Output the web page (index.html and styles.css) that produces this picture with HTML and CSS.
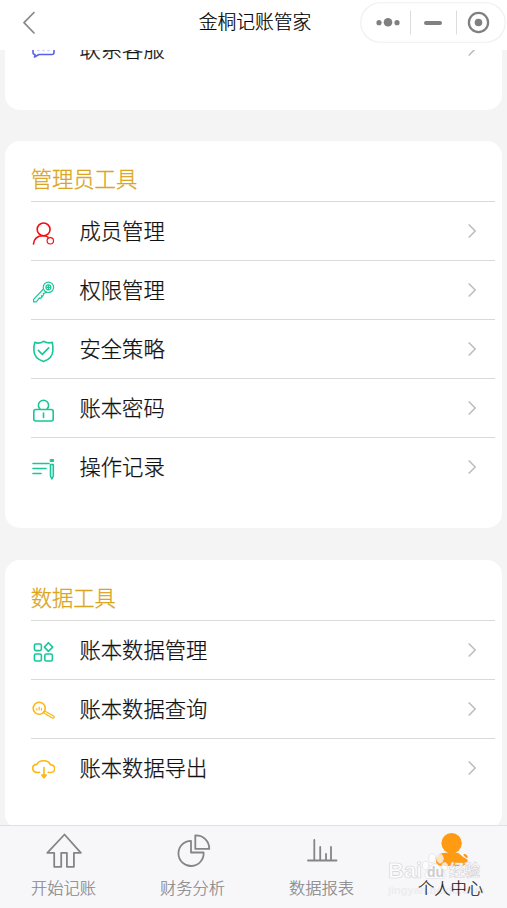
FILE: index.html
```html
<!DOCTYPE html>
<html lang="zh-CN">
<head>
<meta charset="utf-8">
<title>金桐记账管家</title>
<link rel="stylesheet" href="styles.css">
</head>
<body>
<div class="app">
  <header class="header">
    <svg class="back" viewBox="0 0 14 24"><path d="M12 1.5 2 11.7 12 22"/></svg>
    <h1>金桐记账管家</h1>
    <div class="capsule">
      <svg viewBox="0 0 146 41">
        <rect x=".75" y=".75" width="144.5" height="39.5" rx="19.75" fill="#fff" stroke="#f0f0f0" stroke-width="1.2"/>
        <g fill="#808080"><circle cx="19" cy="20.7" r="2.6"/><circle cx="28" cy="20.3" r="4.3"/><circle cx="37" cy="20.7" r="2.6"/><rect x="64" y="19" width="18" height="4" rx="2"/><circle cx="118.5" cy="20.5" r="3.8"/></g>
        <path d="M50.5 9v23M96.5 9v23" stroke="#dcdcdc"/>
        <circle cx="118.5" cy="20.5" r="9.6" fill="none" stroke="#808080" stroke-width="2.3"/>
      </svg>
    </div>
  </header>

  <main class="content">
    <section class="card card-first">
      <div class="row">
        <svg class="icon blue" viewBox="0 0 24 24"><path d="M4 2h17q2 0 2 2v9.500q0 2-2 2H8l-4.500 2.500.5-2.500q-2 0-2-2V4q0-2 2-2Z"/><path d="M7 11.500h1m4 0h1m4 0h1" opacity=".3"/></svg>
        <span>联系客服</span>
        <svg class="arrow" viewBox="0 0 9 14"><path d="m1.200 1 6 6-6 6"/></svg>
      </div>
    </section>

    <section class="card">
      <h2>管理员工具</h2>
      <div class="row">
        <svg class="icon red" viewBox="0 0 24 24"><circle cx="12.600" cy="8.400" r="6.400"/><path d="M2.500 23c.5-5 4-8.300 9.500-8.300 2.200 0 3.700.5 5 1.400"/><circle class="thin" cx="19.300" cy="19.800" r="3.200"/></svg>
        <span>成员管理</span>
        <svg class="arrow" viewBox="0 0 9 14"><path d="m1.200 1 6 6-6 6"/></svg>
      </div>
      <div class="row">
        <svg class="icon green thin" viewBox="0 0 24 24"><circle cx="17.400" cy="7.300" r="5.200"/><circle cx="17.400" cy="7.300" r="2.500"/><path d="M17.400 5.500v3.600M15.600 7.300h3.600M12.500 9 2.600 19.400v2.500h2.700l3.200-4.100.8.700 1.600-1.300-.5-1.500 1.200.4 1.100-1.700-.4-.8 3.200-1.300"/></svg>
        <span>权限管理</span>
        <svg class="arrow" viewBox="0 0 9 14"><path d="m1.200 1 6 6-6 6"/></svg>
      </div>
      <div class="row">
        <svg class="icon green" viewBox="0 0 24 24"><path d="M12.500 2.300Q8 5.300 3.800 3.300 2.800 6 2.900 11.500c.1 5.300 3.700 9 9.600 11.100 5.700-2.100 9.300-5.800 9.400-11.100.1-5.500-.7-8.200-.7-8.200-3.500 1.400-6 .5-8.700-1Z"/><path d="m7.300 11.400 4 4 6.400-6.500"/></svg>
        <span>安全策略</span>
        <svg class="arrow" viewBox="0 0 9 14"><path d="m1.200 1 6 6-6 6"/></svg>
      </div>
      <div class="row">
        <svg class="icon green" viewBox="0 0 24 24"><path d="M9 11a5.100 5.100 0 1 1 7 0"/><rect x="2.800" y="11.500" width="19.400" height="11.500" rx="2"/><path d="M12.500 15v4.500"/></svg>
        <span>账本密码</span>
        <svg class="arrow" viewBox="0 0 9 14"><path d="m1.200 1 6 6-6 6"/></svg>
      </div>
      <div class="row">
        <svg class="icon green" viewBox="0 0 24 24"><path d="M2 6.500h16M2 11.500h13M2 16.500h8M19.500 7.500h2.800v11.500L20.900 22l-1.400-3Z"/><rect x="19.500" y="2.500" width="3" height="2" fill="currentColor" stroke-width="1"/></svg>
        <span>操作记录</span>
        <svg class="arrow" viewBox="0 0 9 14"><path d="m1.200 1 6 6-6 6"/></svg>
      </div>
    </section>

    <section class="card">
      <h2>数据工具</h2>
      <div class="row">
        <svg class="icon green" viewBox="0 0 24 24"><rect x="3.400" y="4" width="7" height="6.600" rx="1.600"/><rect x="3.400" y="14" width="7" height="7" rx="1.600"/><rect x="13.800" y="14" width="7.600" height="7" rx="1.600"/><path d="m17.400 2.700 4.300 4.400-4.300 4.300-4-4.300Z"/></svg>
        <span>账本数据管理</span>
        <svg class="arrow" viewBox="0 0 9 14"><path d="m1.200 1 6 6-6 6"/></svg>
      </div>
      <div class="row">
        <svg class="icon yellow" viewBox="0 0 24 24"><circle cx="8.200" cy="9.200" r="6"/><path class="thin" d="M5.800 9.500v1.500M8.200 8v3M10.500 9.200v1.800"/><path stroke-width="1.300" d="m13.700 12 8.800 5c1.300.9.2 2.700-1.200 2l-8.900-5.200Z"/></svg>
        <span>账本数据查询</span>
        <svg class="arrow" viewBox="0 0 9 14"><path d="m1.200 1 6 6-6 6"/></svg>
      </div>
      <div class="row">
        <svg class="icon yellow" viewBox="0 0 24 24"><path d="M8.500 14.300c-4 .8-6.800-1-6.800-3.900 0-2.400 1.800-4 4.200-4C7 3.800 9.500 2.800 12.700 2.800s5.600 1.300 6.600 3.800c2.800.2 4.500 1.800 4.500 4.200 0 2.800-2.600 4.200-6.500 3.500M13 9.500v9"/><path class="solid" d="M10.800 17h4.400L13 19.700Z"/></svg>
        <span>账本数据导出</span>
        <svg class="arrow" viewBox="0 0 9 14"><path d="m1.200 1 6 6-6 6"/></svg>
      </div>
    </section>
  </main>

  <nav class="tabs">
    <div class="tab"><svg viewBox="0 0 40 40"><path d="M20.500 4.500 3.300 22.800h6.900v14h7v-14h5.700v14h7v-14h7Z"/></svg><span>开始记账</span></div>
    <div class="tab"><svg viewBox="0 0 40 40"><path d="M18 10.800A12.600 12.600 0 1 0 30.600 22.500H18Z"/><path d="M22.300 5.300v13.600h14C36.300 11 30.300 5 22.300 5.300Z"/></svg><span>财务分析</span></div>
    <div class="tab"><svg viewBox="0 0 40 40"><path d="M6 30.500h28.500M12.300 10v20M18.200 17v13M24 24v6M29 17v13"/></svg><span>数据报表</span></div>
    <div class="tab active"><svg viewBox="0 0 40 40"><circle cx="20.600" cy="13.300" r="10.200"/><path d="M15 22.700h12l5.500 4.600 4 2.200q.8 2.400-1.800 4.500-2 2-4 2H11q-4 0-6-3.500 0-6 4-8.600 2-1.200 6-1.200ZM32.800 23.700q4 .4 4 4l-1.500.2-2.800-2.700Z"/></svg><span>个人中心</span></div>
    <div class="watermark">
      <div class="brand"><span class="bai">Bai</span><span class="paw"><svg viewBox="0 0 28 30"><ellipse cx="4" cy="14" rx="3.500" ry="4.500"/><ellipse cx="11" cy="6" rx="3.800" ry="5"/><ellipse cx="19.500" cy="6.500" rx="3.500" ry="5"/><ellipse cx="24.500" cy="15" rx="3.300" ry="4.300"/><path d="M14 12c4 0 5 4 8 7 4 3.500 4 9-1 9H7c-5 0-5-6-1-9 3-3 4-7 8-7Z"/></svg><b>du</b></span><span class="exp">经验</span></div>
      <div class="site">jingyan.baidu.com</div>
    </div>
  </nav>
</div>
</body>
</html>
```
FILE: styles.css
```css
* { box-sizing: border-box; }
body {
  margin: 0;
  background: #f4f4f4;
  font-family: "Noto Sans CJK SC", sans-serif;
  font-weight: 300;
  color: #111;
}
svg { display: block; flex: none; fill: none; stroke-linecap: round; stroke-linejoin: round; }
h1, h2 { margin: 0; font-weight: 300; }
.app { width: 507px; height: 908px; display: flex; flex-direction: column; overflow: hidden; }

.header {
  flex: none;
  height: 50px;
  display: grid;
  grid-template-columns: 147px 1fr 147px;
  align-items: start;
  background: #fff;
}
.back { width: 14px; height: 24px; margin: 11px 0 0 22px; stroke: #888; stroke-width: 1.7; }
.header h1 { text-align: center; font-size: 18.8px; line-height: 42px; color: #000; padding-left: 3px; white-space: nowrap; -webkit-text-stroke: .2px currentColor; }
.capsule svg { width: 146px; height: 41px; margin-top: 2px; }

.content { flex: 1; min-height: 0; overflow: hidden; padding: 0 5px; }
.card { background: #fff; border-radius: 15px; padding: 0 7px 32px 26px; margin-bottom: 32px; }
.card-first { margin-top: -31px; margin-bottom: 31px; }
.card-first .row { border-top-color: transparent; }
.card h2 { height: 60px; padding-top: 7px; font-size: 21.3px; line-height: 60px; color: #daa520; text-indent: -.3px; -webkit-text-stroke: .3px currentColor; }
.row { height: 59px; display: flex; align-items: center; border-top: 1px solid #d9d9d9; }
.row span { flex: 1; margin-left: 24.5px; padding-bottom: 2px; font-size: 21.3px; line-height: 56px; -webkit-text-stroke: .25px currentColor; }
.icon { width: 24px; height: 24px; margin-top: 3px; stroke: currentColor; stroke-width: 1.6; }
.thin { stroke-width: 1.15; }
.solid { fill: currentColor; }
.red { color: #f20d12; }
.green { color: #19c698; }
.yellow { color: #fcb814; }
.blue { color: #5961e6; }
.arrow { width: 9px; height: 14px; margin-right: 18px; stroke: #bebebe; stroke-width: 1.7; }

.tabs {
  position: relative;
  flex: none;
  width: 516px;
  height: 83px;
  margin-left: -1px;
  display: flex;
  border-top: 1px solid #e0e0e2;
  background: #f7f7fa;
}
.tab { flex: 1; display: flex; flex-direction: column; align-items: center; color: #888; font-size: 16.3px; line-height: 24px; }
.tab svg { width: 40px; height: 40px; margin-top: 4px; stroke: #858585; stroke-width: 1.8; }
.tab span { margin-top: 5px; -webkit-text-stroke: .2px currentColor; }
.tab.active { color: #111; }
.tab.active svg { fill: #ff9a13; stroke: none; }
.tab.active span { position: relative; z-index: 2; }

.watermark { position: absolute; left: 389px; top: 26px; width: 105px; font-family: "Liberation Sans", "Noto Sans CJK SC", sans-serif; color: #fcfcfd; }
.brand { display: flex; align-items: flex-end; height: 32px; font-size: 22px; font-weight: 700; line-height: 26px; -webkit-text-stroke: .6px #d3d3d6; }
.bai { width: 34px; }
.paw { position: relative; width: 26px; height: 32px; }
.paw svg { width: 26px; height: 29px; fill: rgba(255,255,255,.72); stroke: #dedee1; stroke-width: .7; }
.paw b { position: absolute; left: 5px; top: 12px; font-size: 14px; line-height: 16px; color: #cdcdd1; -webkit-text-stroke: 0; }
.exp { font-size: 15.5px; margin-left: 1px; white-space: nowrap; }
.site { font-size: 11px; line-height: 12px; font-weight: 700; color: #ececef; }
```
